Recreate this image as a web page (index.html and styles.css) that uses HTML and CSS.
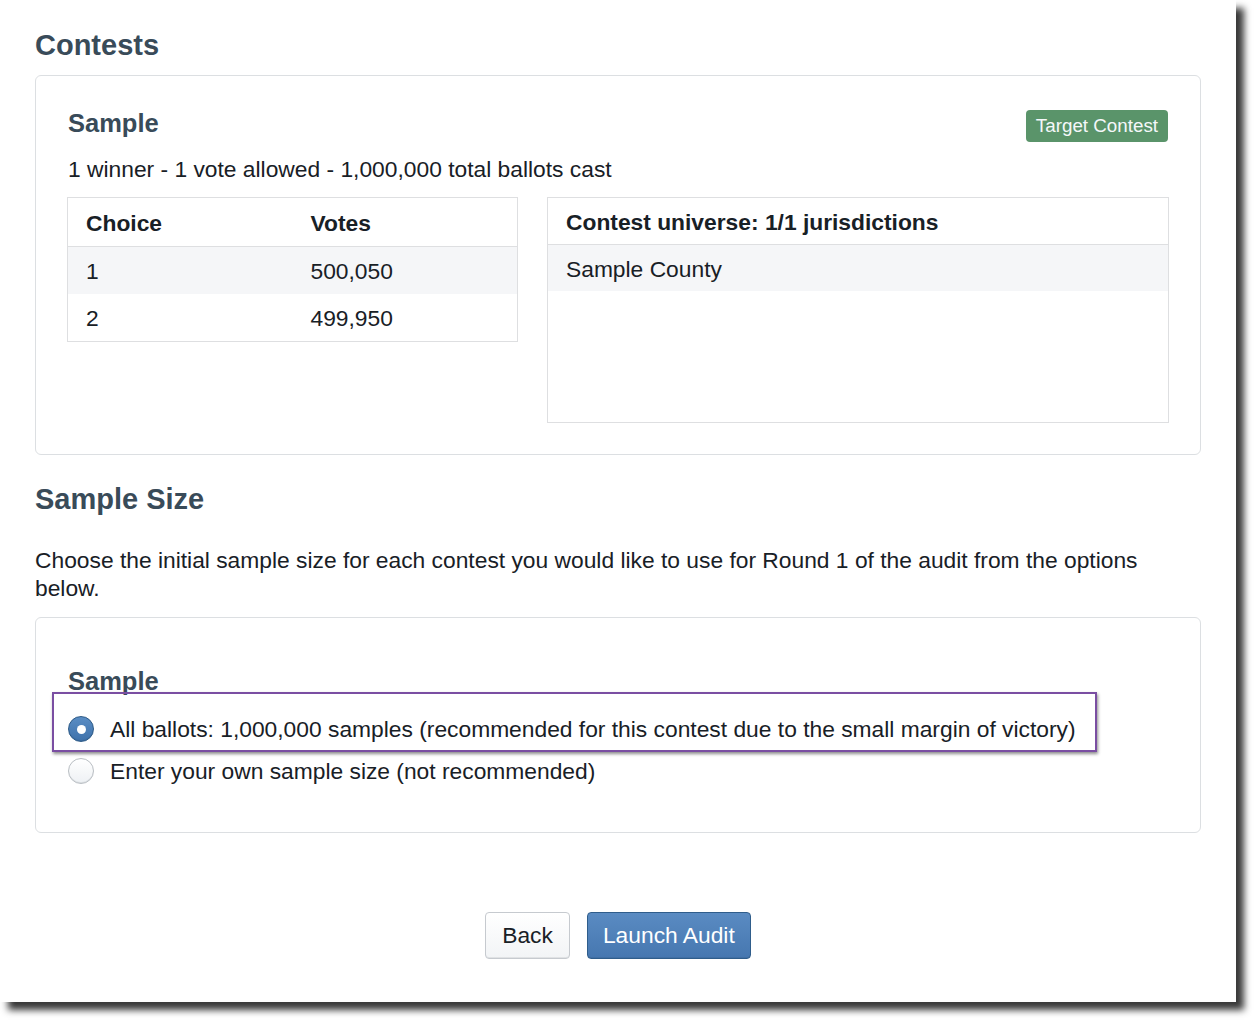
FILE: index.html
```html
<!DOCTYPE html>
<html>
<head>
<meta charset="utf-8">
<title>Audit setup</title>
<link rel="stylesheet" href="styles.css">
</head>
<body>
<div class="window">
  <h2 class="page-title">Contests</h2>
  <section class="card card-contest">
    <div class="card-head">
      <h3 class="card-title">Sample</h3>
      <span class="tag">Target Contest</span>
    </div>
    <p class="meta">1 winner - 1 vote allowed - 1,000,000 total ballots cast</p>
    <div class="tables">
      <table class="tbl choices">
        <thead>
          <tr><th>Choice</th><th>Votes</th></tr>
        </thead>
        <tbody>
          <tr class="striped"><td>1</td><td>500,050</td></tr>
          <tr><td>2</td><td>499,950</td></tr>
        </tbody>
      </table>
      <div class="tbl universe">
        <div class="u-head">Contest universe: 1/1 jurisdictions</div>
        <div class="u-row striped">Sample County</div>
      </div>
    </div>
  </section>

  <h2 class="page-title sample-size">Sample Size</h2>
  <p class="intro">Choose the initial sample size for each contest you would like to use for Round 1 of the audit from the options below.</p>

  <section class="card card-sample">
    <h3 class="card-title sample-title">Sample</h3>
    <div class="options">
      <label class="radio-row"><span class="radio checked"></span>All ballots: 1,000,000 samples (recommended for this contest due to the small margin of victory)</label>
      <label class="radio-row"><span class="radio"></span>Enter your own sample size (not recommended)</label>
    </div>
    <div class="highlight"></div>
  </section>

  <div class="actions">
    <button class="btn">Back</button>
    <button class="btn primary">Launch Audit</button>
  </div>
</div>
</body>
</html>
```

FILE: styles.css
```css
html, body {
  margin: 0;
  padding: 0;
  background: #ffffff;
}

body {
  font-family: "Liberation Sans", Arial, Helvetica, sans-serif;
  font-size: 22.8px;
  color: #182026;
  padding-bottom: 20px;
}

.window {
  width: 1236px;
  height: 1002px;
  box-sizing: border-box;
  padding: 28px 35px 0;
  background: #ffffff;
  box-shadow: 8px 8px 7px rgba(0, 0, 0, 0.78);
}

.page-title {
  margin: 0 0 13px;
  font-size: 29px;
  line-height: 34px;
  font-weight: bold;
  color: #394b59;
}

.card {
  position: relative;
  border: 1px solid #dcdfe2;
  border-radius: 6px;
  padding: 32px 32px 31px;
  background: #fff;
}

.card-head {
  display: flex;
  justify-content: space-between;
  align-items: flex-start;
}

.card-title {
  margin: 0;
  font-size: 25.5px;
  line-height: 30px;
  font-weight: bold;
  color: #394b59;
}

.tag {
  margin-top: 2px;
  height: 32px;
  box-sizing: border-box;
  padding: 0 10px;
  line-height: 32px;
  font-size: 18.8px;
  color: #f5f8fa;
  background: #5a946a;
  border-radius: 4px;
}

.meta {
  margin: 13px 0 14px;
  line-height: 28px;
}

.tables {
  display: grid;
  grid-template-columns: 451px 1fr;
  gap: 29px;
  margin: 0 -1px;
  align-items: start;
}

.tbl {
  border: 1px solid #dedfe1;
}

.choices {
  width: 100%;
  border-collapse: separate;
  border-spacing: 0;
  table-layout: fixed;
}

.choices th,
.choices td {
  height: 46px;
  padding: 2px 18px 0;
  text-align: left;
  vertical-align: middle;
  font-size: 22.8px;
}

.choices th {
  font-weight: bold;
  border-bottom: 1px solid #dedfe1;
}

.choices tbody td {
  height: 45px;
}

.striped {
  background: #f5f6f8;
}

.universe {
  height: 226px;
  box-sizing: border-box;
}

.u-head {
  height: 47px;
  box-sizing: border-box;
  padding: 2px 18px 0;
  line-height: 45px;
  font-weight: bold;
  border-bottom: 1px solid #dedfe1;
}

.u-row {
  height: 46px;
  padding: 2px 18px 0;
  box-sizing: border-box;
  line-height: 44px;
}

.sample-size {
  margin-top: 27px;
  margin-bottom: 30px;
}

.intro {
  margin: 0 0 15px;
  line-height: 28px;
}

.card-sample {
  padding-bottom: 40px;
}

.sample-title {
  margin-top: 16px;
}

.options {
  margin-top: 12px;
  display: flex;
  flex-direction: column;
}

.radio-row {
  display: flex;
  align-items: center;
  gap: 16px;
  height: 42px;
  line-height: 28px;
}

.radio {
  flex: none;
  width: 26px;
  height: 26px;
  box-sizing: border-box;
  border-radius: 50%;
  border: 1px solid #b9bec3;
  background: linear-gradient(#ffffff, #eef1f4);
  box-shadow: inset 0 -1px 0 rgba(16, 22, 26, 0.08);
  position: relative;
}

.radio.checked {
  border: 1px solid #2b5986;
  background: linear-gradient(#5a8dc4, #3f72ab);
}

.radio.checked::after {
  content: "";
  position: absolute;
  left: 50%;
  top: 50%;
  width: 9px;
  height: 9px;
  margin: -4.5px 0 0 -4.5px;
  border-radius: 50%;
  background: #ffffff;
}

.highlight {
  position: absolute;
  left: 16px;
  top: 74px;
  width: 1045px;
  height: 60px;
  box-sizing: border-box;
  border: 2px solid #7a4ea2;
  box-shadow: 1px 2px 3px rgba(0, 0, 0, 0.45);
  pointer-events: none;
}

.actions {
  margin-top: 79px;
  display: flex;
  justify-content: center;
  gap: 17px;
}

.btn {
  height: 47px;
  padding: 0 16px;
  font-family: inherit;
  font-size: 22.8px;
  color: #182026;
  border: 1px solid #c6cacf;
  border-radius: 4px;
  background: linear-gradient(#ffffff, #f2f4f6);
  box-shadow: inset 0 -1px 0 rgba(16, 22, 26, 0.08);
}

.btn.primary {
  color: #ffffff;
  border-color: #2f5d8b;
  background: linear-gradient(#5a8bc2, #4677b0);
  padding: 0 15px;
}
```
